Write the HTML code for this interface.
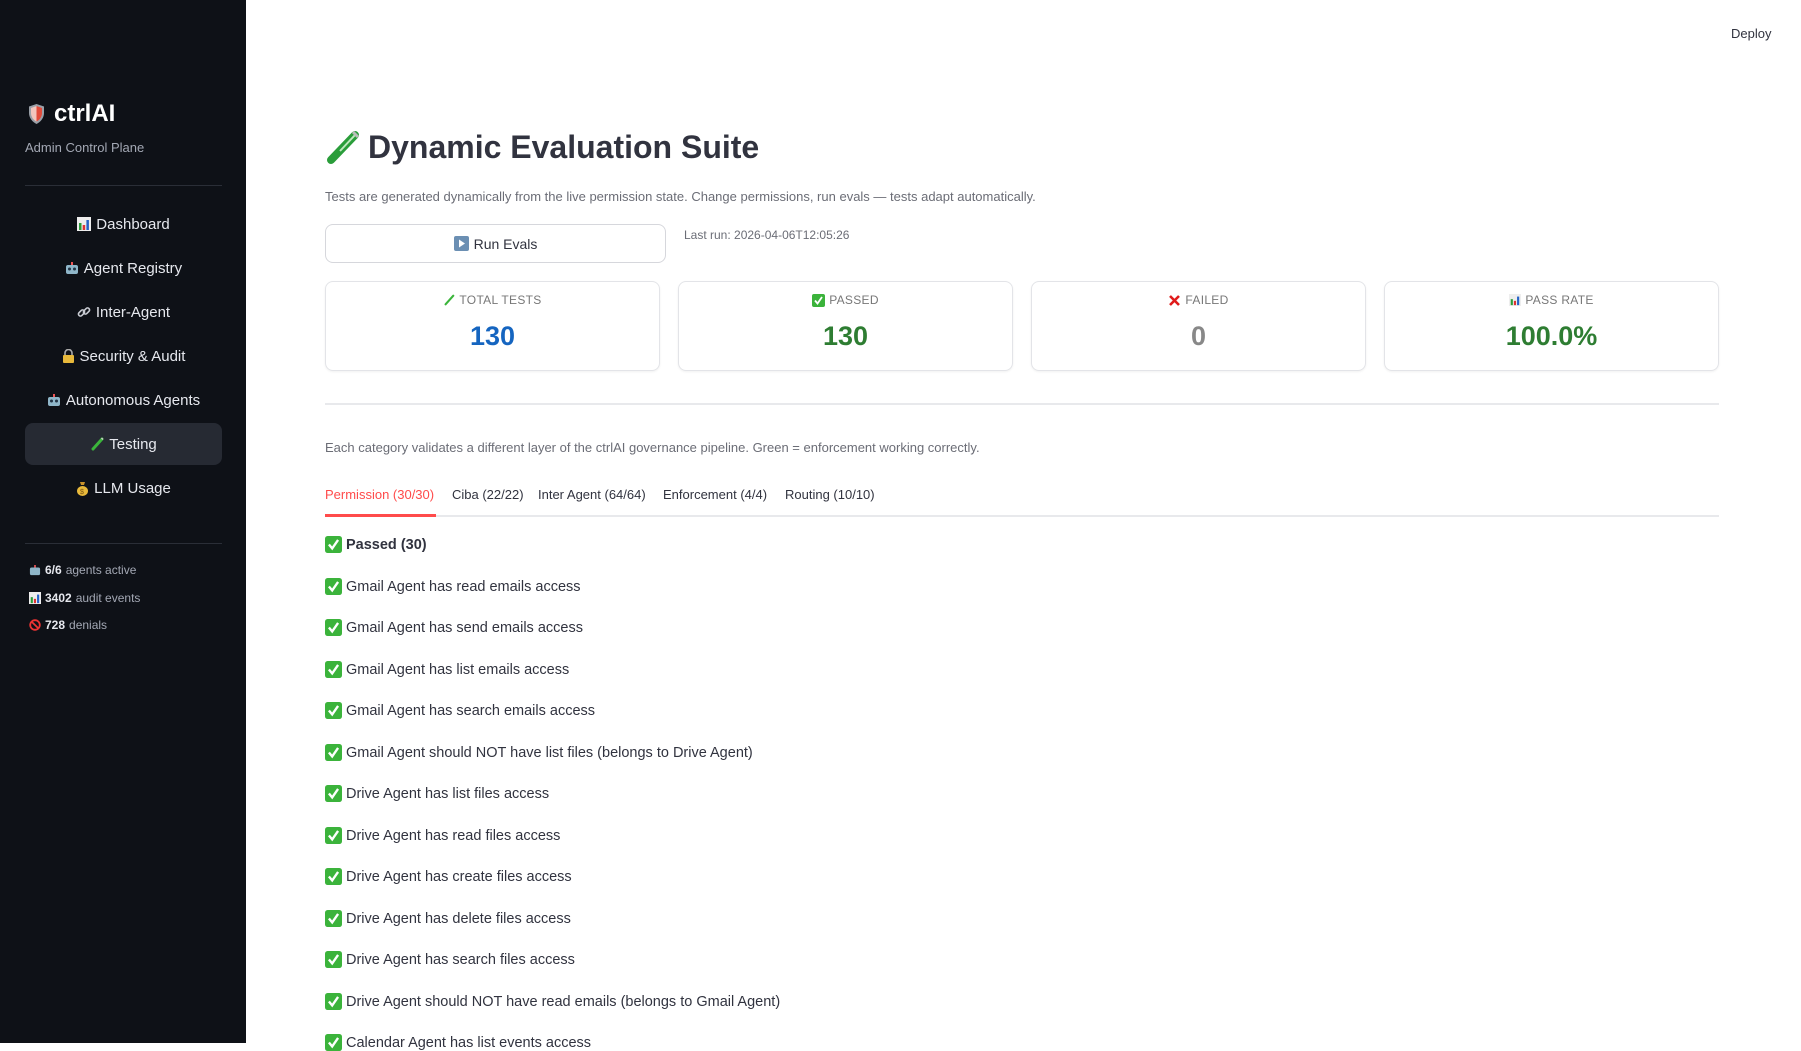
<!DOCTYPE html>
<html><head><meta charset="utf-8">
<style>
*{margin:0;padding:0;box-sizing:border-box}
body{width:1801px;height:1043px;overflow:hidden;background:#fff;font-family:"Liberation Sans",sans-serif;color:#31333f;position:relative}
.sb{position:absolute;left:0;top:0;width:246px;height:1043px;background:#0e1117}
.abs{position:absolute;white-space:nowrap}
.nav{position:absolute;left:25px;width:197px;height:42px;display:flex;align-items:center;justify-content:center;color:#e6e8ee;font-size:15px;gap:5px}
.nav.act{background:#262a33;border-radius:8px}
.st{position:absolute;left:29px;font-size:12px;color:#a3a8b4;display:flex;align-items:center;gap:4px}
.st b{color:#e6e8ee}
.card{position:absolute;top:281px;width:335px;height:90px;border:1px solid #e3e4e8;border-radius:8px;box-shadow:0 1px 2px rgba(0,0,0,.06);text-align:center}
.card .l{margin-top:11px;font-size:12px;color:#777;letter-spacing:.3px;display:flex;justify-content:center;align-items:center;gap:4px}
.card .n{margin-top:14px;font-size:27px;font-weight:bold}
.item{position:absolute;left:325px;font-size:14.5px;display:flex;align-items:center;gap:4px;color:#31333f}
.tab{position:absolute;top:487px;font-size:13px;color:#31333f}
svg{display:block}
</style></head><body>
<div class="sb"></div>
<div class="abs" style="left:28px;top:100px;display:flex;align-items:center;gap:9px;color:#fff;font-size:24px;font-weight:bold">
<svg width="17" height="22" viewBox="0 0 17 22"><path d="M8.5 1 L16 3.5 V10 C16 15 12.5 19 8.5 21 C4.5 19 1 15 1 10 V3.5Z" fill="#9aa0a8"/><path d="M8.5 3 L14 5 V10 C14 14 11.5 17 8.5 18.5Z" fill="#e24b3b"/><path d="M8.5 3 L3 5 V10 C3 14 5.5 17 8.5 18.5Z" fill="#f3c5bd"/></svg>ctrlAI</div>
<div class="abs" style="left:25px;top:140px;font-size:13px;color:#a3a8b4">Admin Control Plane</div>
<div class="abs" style="left:25px;top:185px;width:197px;height:1px;background:#2a2e37"></div>
<div class="nav" style="top:203px"><svg width="14" height="14" viewBox="0 0 14 14"><rect width="14" height="14" fill="#eee"/><rect x="2" y="6" width="2.5" height="7" fill="#2a9d3a"/><rect x="5.7" y="8" width="2.5" height="5" fill="#d33"/><rect x="9.4" y="3" width="2.5" height="10" fill="#2563c9"/></svg>Dashboard</div>
<div class="nav" style="top:247px"><svg width="14" height="13" viewBox="0 0 14 13"><rect x="1" y="3" width="12" height="9" rx="2" fill="#8fb6c9"/><circle cx="4.5" cy="7" r="1.5" fill="#234"/><circle cx="9.5" cy="7" r="1.5" fill="#234"/><rect x="6" y="0" width="2" height="3" fill="#e55"/></svg>Agent Registry</div>
<div class="nav" style="top:291px"><svg width="14" height="14" viewBox="0 0 14 14"><g fill="none" stroke="#c9ccd3" stroke-width="1.6"><rect x="1" y="6" width="7" height="4" rx="2" transform="rotate(-45 4.5 8)"/><rect x="6" y="4" width="7" height="4" rx="2" transform="rotate(-45 9.5 6)"/></g></svg>Inter-Agent</div>
<div class="nav" style="top:335px"><svg width="13" height="14" viewBox="0 0 13 14"><path d="M3 6V4a3.5 3.5 0 0 1 7 0v2" fill="none" stroke="#aaa" stroke-width="1.6"/><rect x="1" y="6" width="11" height="8" rx="1" fill="#e8b93b"/></svg>Security &amp; Audit</div>
<div class="nav" style="top:379px"><svg width="14" height="13" viewBox="0 0 14 13"><rect x="1" y="3" width="12" height="9" rx="2" fill="#8fb6c9"/><circle cx="4.5" cy="7" r="1.5" fill="#234"/><circle cx="9.5" cy="7" r="1.5" fill="#234"/><rect x="6" y="0" width="2" height="3" fill="#e55"/></svg>Autonomous Agents</div>
<div class="nav act" style="top:423px"><svg width="14" height="14" viewBox="0 0 14 14"><path d="M12 2 L3 12" stroke="#3bb53b" stroke-width="3" stroke-linecap="round"/><path d="M11.5 1 L13 2.5" stroke="#ccc" stroke-width="1.5"/></svg>Testing</div>
<div class="nav" style="top:467px"><svg width="13" height="15" viewBox="0 0 13 15"><path d="M4 1h5l-1 3h-3z" fill="#c8922a"/><ellipse cx="6.5" cy="10" rx="5.5" ry="5" fill="#e8b93b"/><text x="4" y="13" font-size="7" fill="#7a5310" font-family="Liberation Sans">$</text></svg>LLM Usage</div>
<div class="abs" style="left:25px;top:543px;width:197px;height:1px;background:#2a2e37"></div>
<div class="st" style="top:563px"><svg width="12" height="11" viewBox="0 0 14 13"><rect x="1" y="3" width="12" height="9" rx="2" fill="#8fb6c9"/><rect x="6" y="0" width="2" height="3" fill="#e55"/></svg><b>6/6</b> agents active</div>
<div class="st" style="top:591px"><svg width="12" height="12" viewBox="0 0 14 14"><rect width="14" height="14" fill="#eee"/><rect x="2" y="6" width="2.5" height="7" fill="#2a9d3a"/><rect x="5.7" y="8" width="2.5" height="5" fill="#d33"/><rect x="9.4" y="3" width="2.5" height="10" fill="#2563c9"/></svg><b>3402</b> audit events</div>
<div class="st" style="top:618px"><svg width="12" height="12" viewBox="0 0 12 12"><circle cx="6" cy="6" r="4.8" fill="none" stroke="#e33" stroke-width="1.8"/><path d="M2.7 2.7 9.3 9.3" stroke="#e33" stroke-width="1.8"/></svg><b>728</b> denials</div>

<div class="abs" style="left:1731px;top:26px;font-size:13px;color:#31333f">Deploy</div>

<div class="abs" style="left:324px;top:129px;display:flex;align-items:center;gap:8px;font-size:32px;font-weight:bold;color:#31333f">
<svg width="36" height="36" viewBox="0 0 36 36"><path d="M31 5 L7 30" stroke="#2a9d3a" stroke-width="8" stroke-linecap="round"/><path d="M31 5 L16 21" stroke="#bfe8bf" stroke-width="2"/><path d="M29 2 L34 7" stroke="#bbb" stroke-width="3"/></svg>Dynamic Evaluation Suite</div>
<div class="abs" style="left:325px;top:189px;font-size:13px;color:#6b6d76">Tests are generated dynamically from the live permission state. Change permissions, run evals — tests adapt automatically.</div>
<div class="abs" style="left:325px;top:224px;width:341px;height:39px;border:1px solid #d6d7dc;border-radius:8px;display:flex;align-items:center;justify-content:center;gap:5px;font-size:14px;color:#31333f"><svg width="15" height="15" viewBox="0 0 15 15"><rect width="15" height="15" rx="2" fill="#6b8fb3"/><path d="M5 3.5 L11 7.5 L5 11.5Z" fill="#fff"/></svg>Run Evals</div>
<div class="abs" style="left:684px;top:228px;font-size:12px;color:#6b6d76">Last run: 2026-04-06T12:05:26</div>

<div class="card" style="left:325px"><div class="l"><svg width="12" height="12" viewBox="0 0 14 14"><path d="M12 2 L3 12" stroke="#3bb53b" stroke-width="2.5" stroke-linecap="round"/></svg>TOTAL TESTS</div><div class="n" style="color:#1565c0">130</div></div>
<div class="card" style="left:678px"><div class="l"><svg width="13" height="13" viewBox="0 0 13 13"><rect width="13" height="13" rx="2" fill="#3bb33b"/><path d="M3 6.5 5.5 9.5 10 3" fill="none" stroke="#fff" stroke-width="1.8"/></svg>PASSED</div><div class="n" style="color:#2e7d32">130</div></div>
<div class="card" style="left:1031px"><div class="l"><svg width="13" height="13" viewBox="0 0 13 13"><path d="M2 2 11 11M11 2 2 11" stroke="#e01b1b" stroke-width="2.6"/></svg>FAILED</div><div class="n" style="color:#888">0</div></div>
<div class="card" style="left:1384px"><div class="l"><svg width="12" height="12" viewBox="0 0 14 14"><rect width="14" height="14" fill="#eee"/><rect x="2" y="6" width="2.5" height="7" fill="#2a9d3a"/><rect x="5.7" y="8" width="2.5" height="5" fill="#d33"/><rect x="9.4" y="3" width="2.5" height="10" fill="#2563c9"/></svg>PASS RATE</div><div class="n" style="color:#2e7d32">100.0%</div></div>

<div class="abs" style="left:325px;top:403px;width:1394px;height:2px;background:#e8e9ec"></div>
<div class="abs" style="left:325px;top:440px;font-size:13px;color:#6b6d76">Each category validates a different layer of the ctrlAI governance pipeline. Green = enforcement working correctly.</div>

<div class="tab" style="left:325px;color:#ff4b4b">Permission (30/30)</div>
<div class="tab" style="left:452px">Ciba (22/22)</div>
<div class="tab" style="left:538px">Inter Agent (64/64)</div>
<div class="tab" style="left:663px">Enforcement (4/4)</div>
<div class="tab" style="left:785px">Routing (10/10)</div>
<div class="abs" style="left:325px;top:515px;width:1394px;height:2px;background:#e8e9ec"></div>
<div class="abs" style="left:325px;top:514px;width:111px;height:3px;background:#ff4b4b"></div>

<div class="item" style="top:536px;font-weight:bold"><svg width="17" height="17" viewBox="0 0 13 13"><rect width="13" height="13" rx="2" fill="#3bb33b"/><path d="M3 6.5 5.5 9.5 10 3" fill="none" stroke="#fff" stroke-width="1.8"/></svg>Passed (30)</div>
<div class="item" style="top:578px"><svg width="17" height="17" viewBox="0 0 13 13"><rect width="13" height="13" rx="2" fill="#3bb33b"/><path d="M3 6.5 5.5 9.5 10 3" fill="none" stroke="#fff" stroke-width="1.8"/></svg>Gmail Agent has read emails access</div>
<div class="item" style="top:619px"><svg width="17" height="17" viewBox="0 0 13 13"><rect width="13" height="13" rx="2" fill="#3bb33b"/><path d="M3 6.5 5.5 9.5 10 3" fill="none" stroke="#fff" stroke-width="1.8"/></svg>Gmail Agent has send emails access</div>
<div class="item" style="top:661px"><svg width="17" height="17" viewBox="0 0 13 13"><rect width="13" height="13" rx="2" fill="#3bb33b"/><path d="M3 6.5 5.5 9.5 10 3" fill="none" stroke="#fff" stroke-width="1.8"/></svg>Gmail Agent has list emails access</div>
<div class="item" style="top:702px"><svg width="17" height="17" viewBox="0 0 13 13"><rect width="13" height="13" rx="2" fill="#3bb33b"/><path d="M3 6.5 5.5 9.5 10 3" fill="none" stroke="#fff" stroke-width="1.8"/></svg>Gmail Agent has search emails access</div>
<div class="item" style="top:744px"><svg width="17" height="17" viewBox="0 0 13 13"><rect width="13" height="13" rx="2" fill="#3bb33b"/><path d="M3 6.5 5.5 9.5 10 3" fill="none" stroke="#fff" stroke-width="1.8"/></svg>Gmail Agent should NOT have list files (belongs to Drive Agent)</div>
<div class="item" style="top:785px"><svg width="17" height="17" viewBox="0 0 13 13"><rect width="13" height="13" rx="2" fill="#3bb33b"/><path d="M3 6.5 5.5 9.5 10 3" fill="none" stroke="#fff" stroke-width="1.8"/></svg>Drive Agent has list files access</div>
<div class="item" style="top:827px"><svg width="17" height="17" viewBox="0 0 13 13"><rect width="13" height="13" rx="2" fill="#3bb33b"/><path d="M3 6.5 5.5 9.5 10 3" fill="none" stroke="#fff" stroke-width="1.8"/></svg>Drive Agent has read files access</div>
<div class="item" style="top:868px"><svg width="17" height="17" viewBox="0 0 13 13"><rect width="13" height="13" rx="2" fill="#3bb33b"/><path d="M3 6.5 5.5 9.5 10 3" fill="none" stroke="#fff" stroke-width="1.8"/></svg>Drive Agent has create files access</div>
<div class="item" style="top:910px"><svg width="17" height="17" viewBox="0 0 13 13"><rect width="13" height="13" rx="2" fill="#3bb33b"/><path d="M3 6.5 5.5 9.5 10 3" fill="none" stroke="#fff" stroke-width="1.8"/></svg>Drive Agent has delete files access</div>
<div class="item" style="top:951px"><svg width="17" height="17" viewBox="0 0 13 13"><rect width="13" height="13" rx="2" fill="#3bb33b"/><path d="M3 6.5 5.5 9.5 10 3" fill="none" stroke="#fff" stroke-width="1.8"/></svg>Drive Agent has search files access</div>
<div class="item" style="top:993px"><svg width="17" height="17" viewBox="0 0 13 13"><rect width="13" height="13" rx="2" fill="#3bb33b"/><path d="M3 6.5 5.5 9.5 10 3" fill="none" stroke="#fff" stroke-width="1.8"/></svg>Drive Agent should NOT have read emails (belongs to Gmail Agent)</div>
<div class="item" style="top:1034px"><svg width="17" height="17" viewBox="0 0 13 13"><rect width="13" height="13" rx="2" fill="#3bb33b"/><path d="M3 6.5 5.5 9.5 10 3" fill="none" stroke="#fff" stroke-width="1.8"/></svg>Calendar Agent has list events access</div>
</body></html>
